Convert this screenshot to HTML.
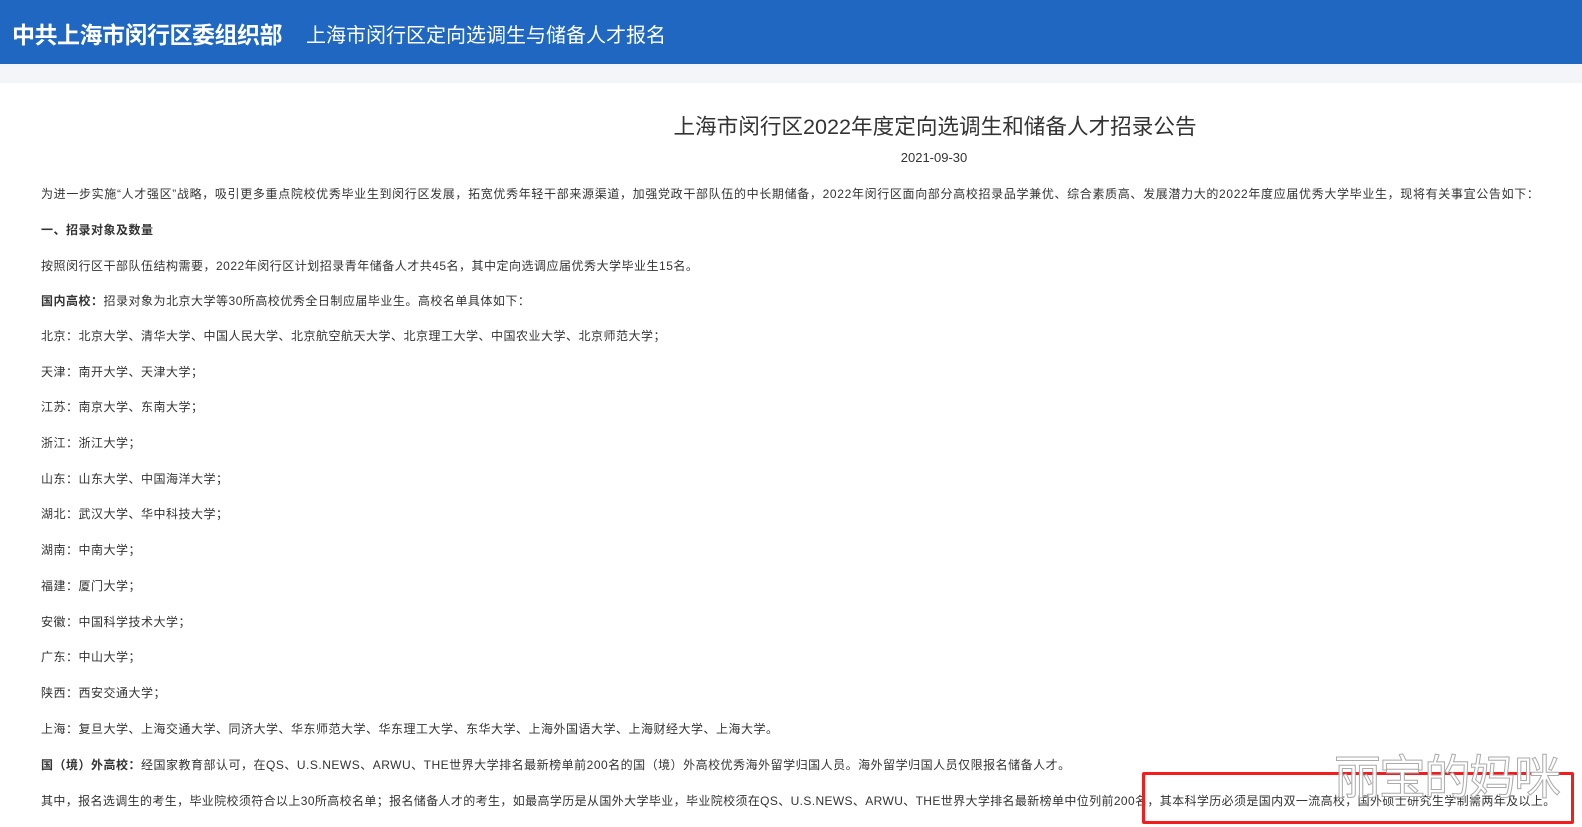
<!DOCTYPE html>
<html><head><meta charset="utf-8"><style>
body{margin:0;width:1582px;height:827px;overflow:hidden;background:#fff;font-family:"Liberation Sans","Noto Sans CJK SC",sans-serif;color:#333;position:relative}
.hd{height:64px;background:#1f67c0;color:#fff;position:relative}
.hd .a{position:absolute;left:12px;top:16px;font-size:23px;font-weight:bold;letter-spacing:-0.5px}
.hd .b{position:absolute;left:306px;top:19px;font-size:20px}
.gap{height:19px;background:#f4f5f8}
.t{position:absolute;left:8px;width:1854px;text-align:center;top:110px;font-size:21.6px;color:#333}
.d{position:absolute;left:7px;width:1854px;text-align:center;top:150px;font-size:13px}
.p{position:absolute;left:41px;font-size:12px;white-space:nowrap;line-height:16px;letter-spacing:0.5px}
b{font-weight:bold}
.box{position:absolute;left:1142px;top:772px;width:426px;height:46px;border:3px solid #f41c1c;border-radius:2px}
.wm{position:absolute;left:1334px;top:739px;font-size:47px;color:#fff;-webkit-text-stroke:1px #aaa;letter-spacing:-2px;font-family:"Noto Sans CJK SC",sans-serif}
</style></head><body>
<div class="hd"><span class="a">中共上海市闵行区委组织部</span><span class="b">上海市闵行区定向选调生与储备人才报名</span></div>
<div class="gap"></div>
<div class="t">上海市闵行区2022年度定向选调生和储备人才招录公告</div>
<div class="d">2021-09-30</div>
<div class="p" style="top:186px;letter-spacing:0.66px">为进一步实施“人才强区”战略，吸引更多重点院校优秀毕业生到闵行区发展，拓宽优秀年轻干部来源渠道，加强党政干部队伍的中长期储备，2022年闵行区面向部分高校招录品学兼优、综合素质高、发展潜力大的2022年度应届优秀大学毕业生，现将有关事宜公告如下：</div>
<div class="p" style="top:222px"><b>一、招录对象及数量</b></div>
<div class="p" style="top:258px">按照闵行区干部队伍结构需要，2022年闵行区计划招录青年储备人才共45名，其中定向选调应届优秀大学毕业生15名。</div>
<div class="p" style="top:293px"><b>国内高校：</b>招录对象为北京大学等30所高校优秀全日制应届毕业生。高校名单具体如下：</div>
<div class="p" style="top:328px">北京：北京大学、清华大学、中国人民大学、北京航空航天大学、北京理工大学、中国农业大学、北京师范大学；</div>
<div class="p" style="top:364px">天津：南开大学、天津大学；</div>
<div class="p" style="top:399px">江苏：南京大学、东南大学；</div>
<div class="p" style="top:435px">浙江：浙江大学；</div>
<div class="p" style="top:471px">山东：山东大学、中国海洋大学；</div>
<div class="p" style="top:506px">湖北：武汉大学、华中科技大学；</div>
<div class="p" style="top:542px">湖南：中南大学；</div>
<div class="p" style="top:578px">福建：厦门大学；</div>
<div class="p" style="top:614px">安徽：中国科学技术大学；</div>
<div class="p" style="top:649px">广东：中山大学；</div>
<div class="p" style="top:685px">陕西：西安交通大学；</div>
<div class="p" style="top:721px">上海：复旦大学、上海交通大学、同济大学、华东师范大学、华东理工大学、东华大学、上海外国语大学、上海财经大学、上海大学。</div>
<div class="p" style="top:757px"><b>国（境）外高校：</b>经国家教育部认可，在QS、U.S.NEWS、ARWU、THE世界大学排名最新榜单前200名的国（境）外高校优秀海外留学归国人员。海外留学归国人员仅限报名储备人才。</div>
<div class="p" style="top:793px;letter-spacing:0.37px">其中，报名选调生的考生，毕业院校须符合以上30所高校名单；报名储备人才的考生，如最高学历是从国外大学毕业，毕业院校须在QS、U.S.NEWS、ARWU、THE世界大学排名最新榜单中位列前200名，其本科学历必须是国内双一流高校，国外硕士研究生学制需两年及以上。</div>
<div class="box"></div>
<div class="wm">丽宝的妈咪</div>
</body></html>
